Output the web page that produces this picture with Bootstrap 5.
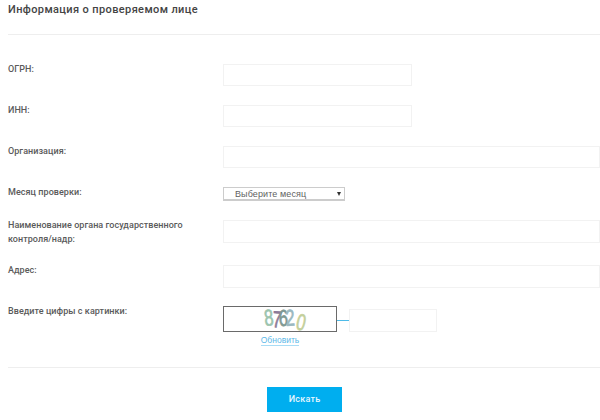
<!DOCTYPE html>
<html lang="ru">
<head>
<meta charset="utf-8">
<title>Поиск</title>
<link href="https://cdn.jsdelivr.net/npm/bootstrap@5.3.0/dist/css/bootstrap.min.css" rel="stylesheet">
<style>
html,body{height:420px;overflow:hidden;background:#fff}
body{font-family:Roboto,"Liberation Sans",sans-serif;color:#4a4a4a;font-size:9px;padding-left:8px}
.head-title{font-size:11px;font-weight:500;letter-spacing:.38px;color:#444;margin:0;padding-top:3px;height:34px;line-height:13px}
.rule{height:1px;background:#eee;margin:0}
.form-area{padding-top:29px}
.field-row{margin-bottom:19px;align-items:flex-start}
.field-label{width:215px;flex:none;font-weight:500;font-size:9px;line-height:14px;letter-spacing:.05px;color:#5a5a5a;margin:0;margin-top:-2px}
.box{display:block;height:22px;border:1px solid #f2f2f2;background:#fff;border-radius:0;padding:0 6px;outline:0}
.box-short{width:189px}
.box-long{width:377px}
.box-tall{height:23px}
.month{width:122px;height:14px;border:1px solid #ccc;border-bottom-width:2px;position:relative;font-family:"Liberation Sans",sans-serif;font-size:9px;line-height:13px;padding-left:11px;color:#5f5f5f;letter-spacing:.1px;background:#fff}
.month-arrow{position:absolute;right:3px;top:4px;width:0;height:0;border-left:2.5px solid transparent;border-right:2.5px solid transparent;border-top:4px solid #333}
.addr-row{margin-bottom:18px}
.captcha-row{margin-bottom:19px}
.captcha-img{display:block;width:114px;height:26px;border:1px solid #6a6a6a;background:#fff;overflow:visible}
.captcha-wire{width:12px;height:1px;background:#4fbbe8;margin-top:14px}
.captcha-input{width:88px;height:23px;margin-top:3px}
.refresh{font-family:"Liberation Sans",sans-serif;font-size:8.5px;color:#5cb8e8;text-decoration:none;border-bottom:1px solid #a8dcf5;line-height:10px;display:inline-block}
.refresh-wrap{width:114px;text-align:center;margin-top:2px}
.go-btn{width:75px;height:25px;background:#00aeef;border:0;border-radius:0;color:#e6f7ff;font-weight:500;font-size:9px;letter-spacing:.25px;padding:1px 0 0}
.go-btn:hover{background:#00aeef;color:#e6f7ff}
.go-wrap{padding-top:19px;padding-left:259px}
.cap-digit{font-family:"Liberation Sans",sans-serif;font-size:23px;stroke-width:.7px}
</style>
</head>
<body>
<h1 class="head-title">Информация о проверяемом лице</h1>
<div class="rule"></div>
<form class="form-area">
  <div class="d-flex field-row">
    <label class="field-label">ОГРН:</label>
    <input class="box box-short" type="text">
  </div>
  <div class="d-flex field-row">
    <label class="field-label">ИНН:</label>
    <input class="box box-short" type="text">
  </div>
  <div class="d-flex field-row">
    <label class="field-label">Организация:</label>
    <input class="box box-long" type="text">
  </div>
  <div class="d-flex field-row">
    <label class="field-label">Месяц проверки:</label>
    <div class="month">Выберите месяц<span class="month-arrow"></span></div>
  </div>
  <div class="d-flex field-row">
    <label class="field-label">Наименование органа государственного контроля/надр:</label>
    <input class="box box-long box-tall" type="text">
  </div>
  <div class="d-flex field-row addr-row">
    <label class="field-label">Адрес:</label>
    <input class="box box-long box-tall" type="text">
  </div>
  <div class="d-flex field-row captcha-row">
    <label class="field-label">Введите цифры с картинки:</label>
    <div>
      <div class="d-flex">
        <svg class="captcha-img" viewBox="0 0 112 24" xmlns="http://www.w3.org/2000/svg">
          <text class="cap-digit" fill="#9cc4ae" stroke="#9cc4ae" transform="translate(41 19) rotate(-6) scale(.72 1)">8</text>
          <text class="cap-digit" fill="#8d7a98" stroke="#8d7a98" transform="translate(48 20) rotate(4) scale(.72 1)">7</text>
          <text class="cap-digit" fill="#7f9a94" stroke="#7f9a94" transform="translate(55 19) rotate(-2) scale(.72 1)">6</text>
          <text class="cap-digit" fill="#9ab8c0" stroke="#9ab8c0" transform="translate(62 19) rotate(-4) scale(.72 1)">2</text>
          <text class="cap-digit" fill="#c3cf9a" stroke="#c3cf9a" transform="translate(71 22) rotate(12) scale(.72 1)">0</text>
        </svg>
        <div class="captcha-wire"></div>
        <input class="box captcha-input" type="text">
      </div>
      <div class="refresh-wrap"><a class="refresh" href="#">Обновить</a></div>
    </div>
  </div>
  <div class="rule"></div>
  <div class="go-wrap"><button class="btn go-btn" type="button">Искать</button></div>
</form>
<script src="https://cdn.jsdelivr.net/npm/bootstrap@5.3.0/dist/js/bootstrap.bundle.min.js"></script>
</body>
</html>
